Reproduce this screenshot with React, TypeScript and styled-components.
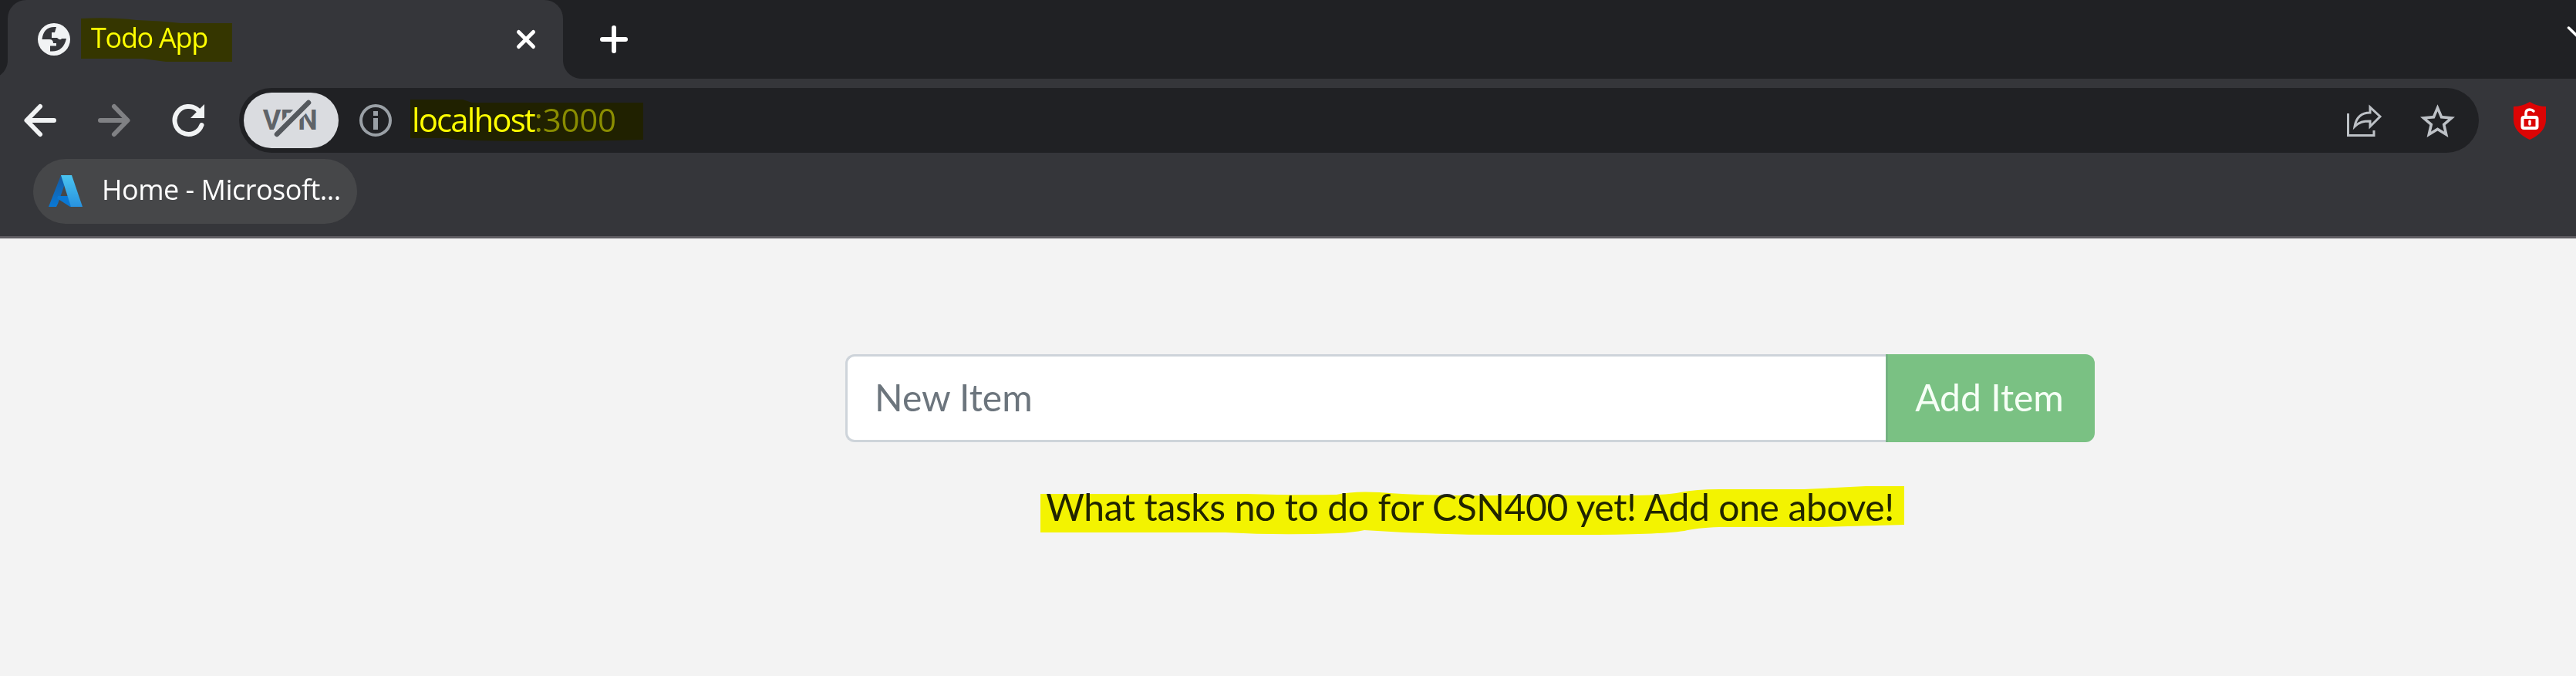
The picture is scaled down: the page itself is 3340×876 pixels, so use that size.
import React from "react";
import styled, { createGlobalStyle } from "styled-components";

const GlobalStyle = createGlobalStyle`
  * { box-sizing: border-box; }
  body { margin: 0; background: #f3f3f3; }
`;

const uiFont = `"Segoe UI", "Open Sans", "Noto Sans", sans-serif`;

const Window = styled.div`
  width: 3340px;
  height: 876px;
  overflow: hidden;
  background: #f3f3f3;
  display: flex;
  flex-direction: column;
`;

const TabStrip = styled.div`
  height: 102px;
  background: #202124;
  display: flex;
  align-items: stretch;
  padding-left: 10px;
`;

const Tab = styled.div`
  position: relative;
  width: 720px;
  background: #35363a;
  border-radius: 24px 24px 0 0;
  display: flex;
  align-items: center;
  padding: 0 36px 0 39px;
`;

const TabFoot = styled.span<{ $side: "left" | "right" }>`
  position: absolute;
  bottom: 0;
  ${(p) => (p.$side === "left" ? "left: -24px" : "right: -24px")};
  width: 24px;
  height: 24px;
  background: radial-gradient(
    circle at ${(p) => (p.$side === "left" ? "0 0" : "100% 0")},
    transparent 23.5px,
    #35363a 24.5px
  );
`;

const Label = styled.span<{ $size: number; $spacing: number; $lift: number; $color?: string }>`
  font: 400 ${(p) => p.$size}px/1.2 ${uiFont};
  letter-spacing: ${(p) => p.$spacing}px;
  padding-bottom: ${(p) => p.$lift}px;
  color: ${(p) => p.$color ?? "#fff"};
  white-space: nowrap;
`;

const Marked = styled.span<{ $ml: number }>`
  position: relative;
  display: inline-flex;
  margin-left: ${(p) => p.$ml}px;
`;

const Marker = styled.svg<{ $x: number; $y: number }>`
  position: absolute;
  left: ${(p) => p.$x}px;
  top: ${(p) => p.$y}px;
  mix-blend-mode: multiply;
  fill: #ffff00;
  overflow: visible;
`;

const Icon = styled.svg<{ $ml?: number }>`
  display: block;
  flex: none;
  margin-left: ${(p) => p.$ml ?? 0}px;
  overflow: visible;
`;

const Spacer = styled.div`
  flex: 1;
`;

const Toolbar = styled.div`
  height: 96px;
  background: #35363a;
  display: flex;
  align-items: center;
  padding: 12px 0 0 31px;
`;

const AddressBar = styled.div`
  width: 2904px;
  height: 84px;
  margin-left: 45px;
  border-radius: 42px;
  background: #202124;
  display: flex;
  align-items: center;
  padding: 0 31px 0 6px;
`;

const VpnBadge = styled.div`
  position: relative;
  width: 123px;
  height: 72px;
  border-radius: 36px;
  background: #dadce0;
  display: flex;
  align-items: center;
  justify-content: center;
  font: 700 36px/1 Roboto, sans-serif;
  letter-spacing: -0.6px;
  padding-right: 3px;
  color: #5f6368;
  margin-right: 27px;
`;

const Slash = styled.svg`
  position: absolute;
  left: 0;
  top: 0;
`;

const Bookmarks = styled.div`
  height: 111px;
  background: #35363a;
  border-bottom: 3px solid #5f5d62;
  padding: 8px 0 0 43px;
`;

const Bookmark = styled.div`
  width: 420px;
  height: 84px;
  border-radius: 42px;
  background: #464749;
  display: flex;
  align-items: center;
  padding-left: 20px;
`;

const Page = styled.main`
  flex: 1;
  padding-top: 150px;
  display: flex;
  flex-direction: column;
  align-items: center;
  padding-left: 472px;
  font-family: Lato, sans-serif;
  font-size: 48px;
  line-height: 72px;
`;

const InputGroup = styled.form`
  display: flex;
  width: 1620px;
  height: 114px;
`;

const NewItem = styled.input`
  flex: 1;
  min-width: 0;
  border: 3px solid #ced4da;
  border-right: 0;
  border-radius: 12px 0 0 12px;
  background: #fff;
  padding: 0 36px 2px 35px;
  font: inherit;
  &::placeholder {
    color: #6c757d;
    opacity: 1;
  }
`;

const AddButton = styled.button`
  width: 271px;
  border: 0;
  border-left: 3px solid #74b281;
  border-radius: 0 12px 12px 0;
  background: #7ac183;
  color: #f6fff6;
  font: inherit;
  padding: 0 5px 2px 0;
`;

const Message = styled.p`
  position: relative;
  margin: 48px 0 0;
  color: #212529;
  letter-spacing: -0.38px;
  white-space: nowrap;
`;

export default function App() {
  return (
    <Window>
      <GlobalStyle />
      <TabStrip>
        <Tab>
          <TabFoot $side="left" />
          <TabFoot $side="right" />
          <Icon width="42" height="42" viewBox="0 0 42 42">
            <circle cx="21" cy="21" r="21" fill="#f1f3f4" />
            <path
              d="M24 5C13 4 7 9 5.500 21H15Q20 21 20 26H24V29.500H16V36.500Q33 38 37 20H31Q29 23 25 19H18V12H22Z"
              fill="#35363a"
            />
          </Icon>
          <Marked $ml={27}>
            <Label $size={36} $spacing={-1.3} $lift={4}>Todo App</Label>
            <Marker $x={-13} $y={-4} width="196" height="58">
              <path d="M0 1Q40-1 72 3Q104 4 130 7H196V57H110L80 53H0Z" />
            </Marker>
          </Marked>
          <Spacer />
          <Icon width="24" height="24" viewBox="0 0 24 24" stroke="#fff" strokeWidth="5" strokeLinecap="round">
            <path d="M2.5 2.5L21.5 21.5M21.5 2.5L2.5 21.5" />
          </Icon>
        </Tab>
        <Icon $ml={48} width="36" height="102" viewBox="0 0 36 102" stroke="#fff" strokeWidth="6" strokeLinecap="round">
          <path d="M3 51H33M18 36V66" />
        </Icon>
        <Spacer />
        <Icon width="11" height="102" viewBox="0 0 11 102" stroke="#fff" strokeWidth="3.5" strokeLinecap="round" fill="none">
          <path d="M1.5 36L17 51L32 36" />
        </Icon>
      </TabStrip>
      <Toolbar>
        <Icon width="42" height="42" viewBox="0 0 42 42" stroke="#f1f3f4" strokeWidth="6" strokeLinecap="round" strokeLinejoin="round" fill="none">
          <path d="M39 21H4M21 3L3.5 21L21 39" />
        </Icon>
        <Icon $ml={54} width="42" height="42" viewBox="0 0 42 42" stroke="#808184" strokeWidth="6" strokeLinecap="round" strokeLinejoin="round" fill="none">
          <path d="M3 21H38M21 3L38.5 21L21 39" />
        </Icon>
        <Icon $ml={54} width="42" height="42" viewBox="0 0 42 42">
          <path d="M34 8A18 18 0 1 0 38.5 27" stroke="#f1f3f4" strokeWidth="6" strokeLinecap="round" fill="none" />
          <path d="M42 0V18H24Z" fill="#f1f3f4" />
        </Icon>
        <AddressBar>
          <VpnBadge>
            VPN
            <Slash width="123" height="72" strokeLinecap="round">
              <path d="M43 54L84 13" stroke="#dadce0" strokeWidth="15" />
              <path d="M43 54L84 13" stroke="#54585d" strokeWidth="6.5" />
            </Slash>
          </VpnBadge>
          <Icon width="42" height="42" viewBox="0 0 42 42">
            <circle cx="21" cy="21" r="19" stroke="#9aa0a6" strokeWidth="4" fill="none" />
            <path d="M18 9H24V15H18ZM18 18H24V33H18Z" fill="#9aa0a6" />
          </Icon>
          <Marked $ml={26}>
            <Label $size={42} $spacing={-1.9} $lift={2}>localhost</Label>
            <Label $size={42} $spacing={-0.2} $lift={2} $color="#8a8d91">:3000</Label>
            <Marker $x={-2} $y={-2} width="303" height="54">
              <path d="M0 1H68L80 5H302V53Q150 57 60 53L48 51H0Z" />
            </Marker>
          </Marked>
          <Spacer />
          <Icon width="46" height="42" viewBox="0 0 46 42" stroke="#bdc1c6" strokeWidth="3" fill="none">
            <path d="M2.500 12V40.500H36V34" />
            <path d="M11 29C13 17 19 11 31 11V4L44 16L31 29V22C22 22 17 23 11 29Z" />
          </Icon>
          <Icon $ml={50} width="45" height="43" viewBox="2 2 20 19" fill="#bdc1c6">
            <path d="M22 9.24l-7.19-.62L12 2 9.19 8.63 2 9.24l5.46 4.73L5.82 21 12 17.27 18.18 21l-1.63-7.03L22 9.24zM12 15.4l-3.76 2.27 1-4.28-3.32-2.88 4.38-.38L12 6.1l1.71 4.04 4.38.38-3.32 2.88 1 4.28L12 15.4z" />
          </Icon>
        </AddressBar>
        <Icon $ml={44} width="44" height="49" viewBox="0 0 44 49">
          <path d="M22 0Q32 6 43 6V24Q42 40 22 49Q2 40 1 24V6Q12 6 22 0Z" fill="#dc0404" />
          <rect x="12.500" y="20" width="19" height="14" rx="2" stroke="#fff" strokeWidth="4" fill="none" />
          <path d="M17 20V15Q17 10 22 10Q25 10 27 12M22 25V29" stroke="#fff" strokeWidth="3.500" strokeLinecap="round" fill="none" />
        </Icon>
      </Toolbar>
      <Bookmarks>
        <Bookmark>
          <Icon width="44" height="42" viewBox="0 0 44 42">
            <defs>
              <linearGradient id="azureLeft" x1="0" y1="0" x2="0" y2="1">
                <stop offset="0" stopColor="#1459a0" />
                <stop offset="1" stopColor="#0a78d4" />
              </linearGradient>
              <linearGradient id="azureRight" x1="0" y1="0" x2="0" y2="1">
                <stop offset="0" stopColor="#4ac4f0" />
                <stop offset="1" stopColor="#2892df" />
              </linearGradient>
            </defs>
            <path d="M16 0H25L18 20L12 37L10 41H0Z" fill="url(#azureLeft)" />
            <path d="M12 27H25L32 41H28L11 30Z" fill="#0a78d4" />
            <path d="M16 0H30L44 41H29Z" fill="url(#azureRight)" />
          </Icon>
          <Marked $ml={25}>
            <Label $size={36} $spacing={-0.5} $lift={4}>Home - Microsoft...</Label>
          </Marked>
        </Bookmark>
      </Bookmarks>
      <Page>
        <InputGroup>
          <NewItem placeholder="New Item" />
          <AddButton type="button">Add Item</AddButton>
        </InputGroup>
        <Message>
          What tasks no to do for CSN400 yet! Add one above!
          <Marker $x={-7} $y={9} width="1120" height="62">
            <path d="M0 10H265Q330 12 384 11Q405 6 440 8Q500 13 600 12L760 12Q810 12 830 8Q850 4 880 4H990L1070 0H1120V50L1010 53H880Q850 54 835 58Q800 63 700 63H600Q510 63 420 57Q405 60 385 61Q310 64 240 60H0Z" />
          </Marker>
        </Message>
      </Page>
    </Window>
  );
}
